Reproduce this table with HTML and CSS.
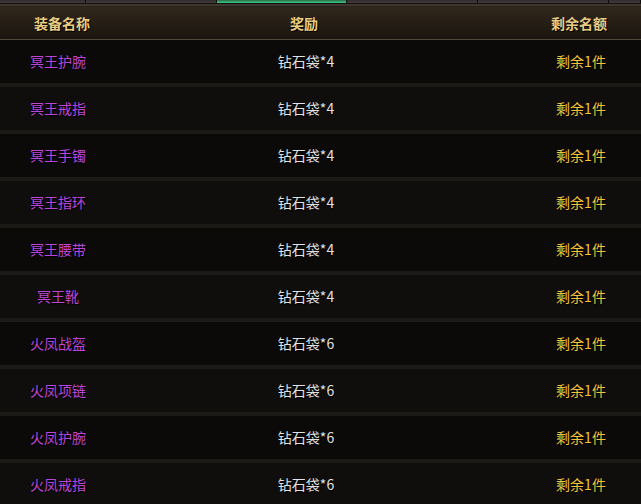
FILE: index.html
```html
<!DOCTYPE html>
<html lang="zh">
<head>
<meta charset="utf-8">
<link rel="stylesheet" href="styles.css">
</head>
<body>
<div class="panel">
  <div class="tabs">
    <div class="tab"></div>
    <div class="tab"></div>
    <div class="tab active"></div>
    <div class="tab"></div>
    <div class="tab"></div>
    <div class="tab"></div>
  </div>
  <div class="rule"></div>
  <div class="head">
    <div class="h1">装备名称</div>
    <div class="h2">奖励</div>
    <div class="h3">剩余名额</div>
  </div>
  <div class="rows">
    <div class="row"><span class="name">冥王护腕</span><span class="reward">钻石袋*4</span><span class="left">剩余1件</span></div>
    <div class="row alt"><span class="name">冥王戒指</span><span class="reward">钻石袋*4</span><span class="left">剩余1件</span></div>
    <div class="row"><span class="name">冥王手镯</span><span class="reward">钻石袋*4</span><span class="left">剩余1件</span></div>
    <div class="row alt"><span class="name">冥王指环</span><span class="reward">钻石袋*4</span><span class="left">剩余1件</span></div>
    <div class="row"><span class="name">冥王腰带</span><span class="reward">钻石袋*4</span><span class="left">剩余1件</span></div>
    <div class="row alt"><span class="name">冥王靴</span><span class="reward">钻石袋*4</span><span class="left">剩余1件</span></div>
    <div class="row"><span class="name">火凤战盔</span><span class="reward">钻石袋*6</span><span class="left">剩余1件</span></div>
    <div class="row alt"><span class="name">火凤项链</span><span class="reward">钻石袋*6</span><span class="left">剩余1件</span></div>
    <div class="row"><span class="name">火凤护腕</span><span class="reward">钻石袋*6</span><span class="left">剩余1件</span></div>
    <div class="row alt"><span class="name">火凤戒指</span><span class="reward">钻石袋*6</span><span class="left">剩余1件</span></div>
  </div>
</div>
</body>
</html>
```
FILE: styles.css
```css
html, body {
  margin: 0;
  padding: 0;
  background: #0b0a09;
  overflow: hidden;
}
.panel {
  width: 641px;
  font-family: "Noto Sans CJK SC", "Noto Sans", sans-serif;
  font-size: 14px;
}
.tabs {
  display: grid;
  grid-template-columns: 86px 131px 130px 131px 131px 32px;
  height: 3px;
  background: #111;
}
.tab {
  background: linear-gradient(to bottom, #2a2d33, #4a3a36);
  border-right: 1px solid #0e0d0c;
}
.tab.active {
  background: linear-gradient(to bottom, #2b6a4a, #3fd088);
}
.rule {
  height: 4px;
  background: linear-gradient(to bottom, #14110e 0, #14110e 1px, #3e3730 1px, #3e3730 3px, #2a2219 3px);
}
.head {
  display: grid;
  grid-template-columns: 116px 380px 1fr;
  align-items: center;
  height: 31px;
  padding-bottom: 1px;
  background: linear-gradient(to bottom, #30271c, #1b150f);
  border-bottom: 1px solid #50463a;
  color: #e9cc82;
  font-weight: bold;
  text-shadow: 1px 1px 0 #000;
}
.h1 { text-align: center; padding-left: 8px; }
.h2 { text-align: center; padding-right: 4px; }
.h3 { text-align: center; padding-left: 23px; padding-right: 2px; }
.rows {
  display: flex;
  flex-direction: column;
}
.row {
  display: grid;
  grid-template-columns: 116px 380px 1fr;
  align-items: center;
  height: 41px;
  padding-bottom: 2px;
  background: #0b0a09;
  border-bottom: 4px solid #1c1a17;
  text-shadow: 1px 1px 1px #000;
}
.row.alt {
  background: #100e0c;
}
.name {
  text-align: center;
  color: #bb46d8;
}
.reward {
  text-align: center;
  color: #e2e2e2;
}
.left {
  text-align: center;
  padding-left: 25px;
  color: #f5c43c;
}
```
